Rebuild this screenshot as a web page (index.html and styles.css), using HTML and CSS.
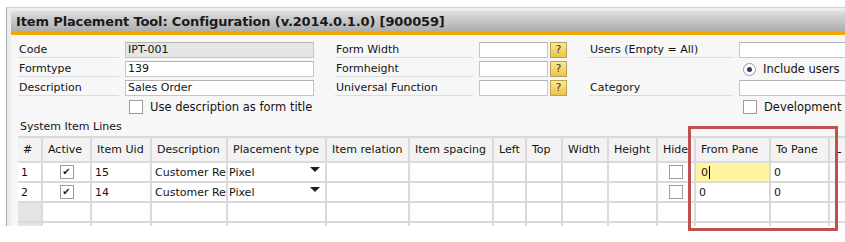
FILE: index.html
```html
<!DOCTYPE html>
<html>
<head>
<meta charset="utf-8">
<link rel="stylesheet" href="styles.css">
</head>
<body>
<div class="window">
  <div class="titlebar">Item Placement Tool: Configuration (v.2014.0.1.0) [900059]</div>
  <div class="accent"></div>
  <div class="content">
    <div class="form">
      <div class="lbl">Code</div>
      <div class="field ro">IPT-001</div>
      <div></div>
      <div class="lbl">Form Width</div>
      <div class="field"></div>
      <div></div>
      <div class="qbtn">?</div>
      <div></div>
      <div class="lbl">Users (Empty = All)</div>
      <div class="field"></div>

      <div class="lbl">Formtype</div>
      <div class="field">139</div>
      <div></div>
      <div class="lbl">Formheight</div>
      <div class="field"></div>
      <div></div>
      <div class="qbtn">?</div>
      <div></div>
      <div></div>
      <div class="opt"><span class="radio"><span class="dot"></span></span>Include users</div>

      <div class="lbl">Description</div>
      <div class="field">Sales Order</div>
      <div></div>
      <div class="lbl">Universal Function</div>
      <div class="field"></div>
      <div></div>
      <div class="qbtn">?</div>
      <div></div>
      <div class="lbl">Category</div>
      <div class="field"></div>

      <div></div>
      <div class="opt"><span class="cb"></span>Use description as form title</div>
      <div></div>
      <div></div>
      <div></div>
      <div></div>
      <div></div>
      <div></div>
      <div></div>
      <div class="opt"><span class="cb"></span>Development</div>
    </div>

    <div class="section">System Item Lines</div>

    <div class="grid">
      <div class="th">#</div>
      <div class="th">Active</div>
      <div class="th">Item Uid</div>
      <div class="th">Description</div>
      <div class="th">Placement type</div>
      <div class="th">Item relation</div>
      <div class="th">Item spacing</div>
      <div class="th">Left</div>
      <div class="th">Top</div>
      <div class="th">Width</div>
      <div class="th">Height</div>
      <div class="th">Hide</div>
      <div class="th">From Pane</div>
      <div class="th">To Pane</div>
      <div class="th">L</div>

      <div class="td">1</div>
      <div class="td center"><span class="cb checked">&#10004;</span></div>
      <div class="td">15</div>
      <div class="td">Customer Re</div>
      <div class="td combo"><span>Pixel</span><span class="arrow"></span></div>
      <div class="td"></div>
      <div class="td"></div>
      <div class="td"></div>
      <div class="td"></div>
      <div class="td"></div>
      <div class="td"></div>
      <div class="td center"><span class="cb"></span></div>
      <div class="td active">0<span class="caret"></span></div>
      <div class="td">0</div>
      <div class="td"></div>

      <div class="td">2</div>
      <div class="td center"><span class="cb checked">&#10004;</span></div>
      <div class="td">14</div>
      <div class="td">Customer Re</div>
      <div class="td combo"><span>Pixel</span><span class="arrow"></span></div>
      <div class="td"></div>
      <div class="td"></div>
      <div class="td"></div>
      <div class="td"></div>
      <div class="td"></div>
      <div class="td"></div>
      <div class="td center"><span class="cb"></span></div>
      <div class="td">0</div>
      <div class="td">0</div>
      <div class="td"></div>

      <div class="td rownum"></div>
      <div class="td"></div><div class="td"></div><div class="td"></div><div class="td"></div>
      <div class="td"></div><div class="td"></div><div class="td"></div><div class="td"></div>
      <div class="td"></div><div class="td"></div><div class="td"></div><div class="td"></div>
      <div class="td"></div><div class="td"></div>

      <div class="td rownum"></div>
      <div class="td"></div><div class="td"></div><div class="td"></div><div class="td"></div>
      <div class="td"></div><div class="td"></div><div class="td"></div><div class="td"></div>
      <div class="td"></div><div class="td"></div><div class="td"></div><div class="td"></div>
      <div class="td"></div><div class="td"></div>
    </div>
  </div>
</div>
<div class="highlight"></div>
</body>
</html>
```
FILE: styles.css
```css
* { box-sizing: border-box; }

html, body {
  margin: 0;
  padding: 0;
  background: #ffffff;
  width: 845px;
  height: 242px;
  overflow: hidden;
}

body {
  position: relative;
  font-family: "DejaVu Sans", Verdana, sans-serif;
  font-size: 11px;
  color: #141414;
}

.window {
  margin: 7px 0 0 6px;
  width: 860px;
  border-left: 1px solid #a9a9a9;
  border-top: 1px solid #d2d2d2;
  background: #ececec;
  padding: 3px 0 0 4px;
}

.titlebar {
  height: 21px;
  line-height: 21px;
  padding-left: 5px;
  font-weight: bold;
  font-size: 13px;
  letter-spacing: -0.14px;
  color: #1a1a1a;
  background: linear-gradient(#dedede, #ababab);
  white-space: nowrap;
  overflow: hidden;
}

.accent {
  height: 3px;
  background: #f0a800;
}

.content {
  background: #f7f7f7;
  height: 191px;
  overflow: hidden;
  padding: 7px 0 0 7px;
}

.form {
  display: grid;
  grid-template-columns: 107px 189px 21px 144px 69px 2px 17px 22px 150px 1fr;
  grid-auto-rows: 16px;
  row-gap: 3px;
}

.lbl {
  line-height: 15px;
  padding-left: 1px;
  margin-right: 6px;
  border-bottom: 1px solid #dcdcdc;
  white-space: nowrap;
}

.field {
  background: #ffffff;
  border: 1px solid #c6c6c6;
  border-top-color: #b4b4b4;
  line-height: 14px;
  padding-left: 2px;
  white-space: nowrap;
}

.field.ro {
  background: #e6e6e6;
}

.qbtn {
  background: linear-gradient(#fde98c, #f0c24a);
  border: 1px solid #b7a05a;
  text-align: center;
  line-height: 14px;
  font-size: 11px;
  color: #333;
}

.opt {
  display: flex;
  align-items: center;
  gap: 7px;
  padding-left: 4px;
  white-space: nowrap;
  font-size: 11.5px;
}

.cb {
  display: inline-flex;
  align-items: center;
  justify-content: center;
  width: 14px;
  height: 14px;
  background: #ffffff;
  border: 1px solid #9c9c9c;
  font-size: 10px;
  line-height: 1;
  color: #1a1a1a;
}

.radio {
  display: inline-flex;
  align-items: center;
  justify-content: center;
  width: 13px;
  height: 13px;
  border-radius: 50%;
  border: 1px solid #9a9a9a;
  background: #ffffff;
}

.dot {
  width: 5px;
  height: 5px;
  border-radius: 50%;
  background: #2a3a6a;
}

.section {
  margin-top: 5px;
  padding-left: 2px;
  line-height: 14px;
  height: 16px;
}

.grid {
  display: grid;
  grid-template-columns: 25px 49px 60px 76px 99px 83px 84px 33px 36px 46px 49px 38px 75px 59px 60px;
  grid-template-rows: 25px 20px 20px 20px 20px;
  border-top: 2px solid #dadada;
  width: 900px;
}

.th, .td {
  border-right: 2px solid #dadada;
  border-bottom: 2px solid #dadada;
  white-space: nowrap;
  overflow: hidden;
  display: flex;
  align-items: center;
}

.th {
  background: #f3f3f3;
  padding-left: 5px;
  padding-bottom: 1px;
}

.td {
  background: #ffffff;
  padding-left: 3px;
}

.td.center {
  justify-content: center;
  padding-left: 0;
}

.td.rownum {
  background: #e4e4e4;
}

.td.combo {
  justify-content: space-between;
  padding-right: 5px;
  padding-left: 1px;
}

.arrow {
  width: 0;
  height: 0;
  border-left: 5px solid transparent;
  border-right: 5px solid transparent;
  border-top: 5px solid #1e1e1e;
  margin-bottom: 6px;
}

.td.active {
  background: #fff4a0;
  padding-left: 5px;
}

.caret {
  display: inline-block;
  width: 1px;
  height: 13px;
  background: #000;
  margin-left: 1px;
}

.highlight {
  position: absolute;
  left: 688px;
  top: 126px;
  width: 150px;
  height: 105px;
  border: 3px solid #c0504d;
}
```
